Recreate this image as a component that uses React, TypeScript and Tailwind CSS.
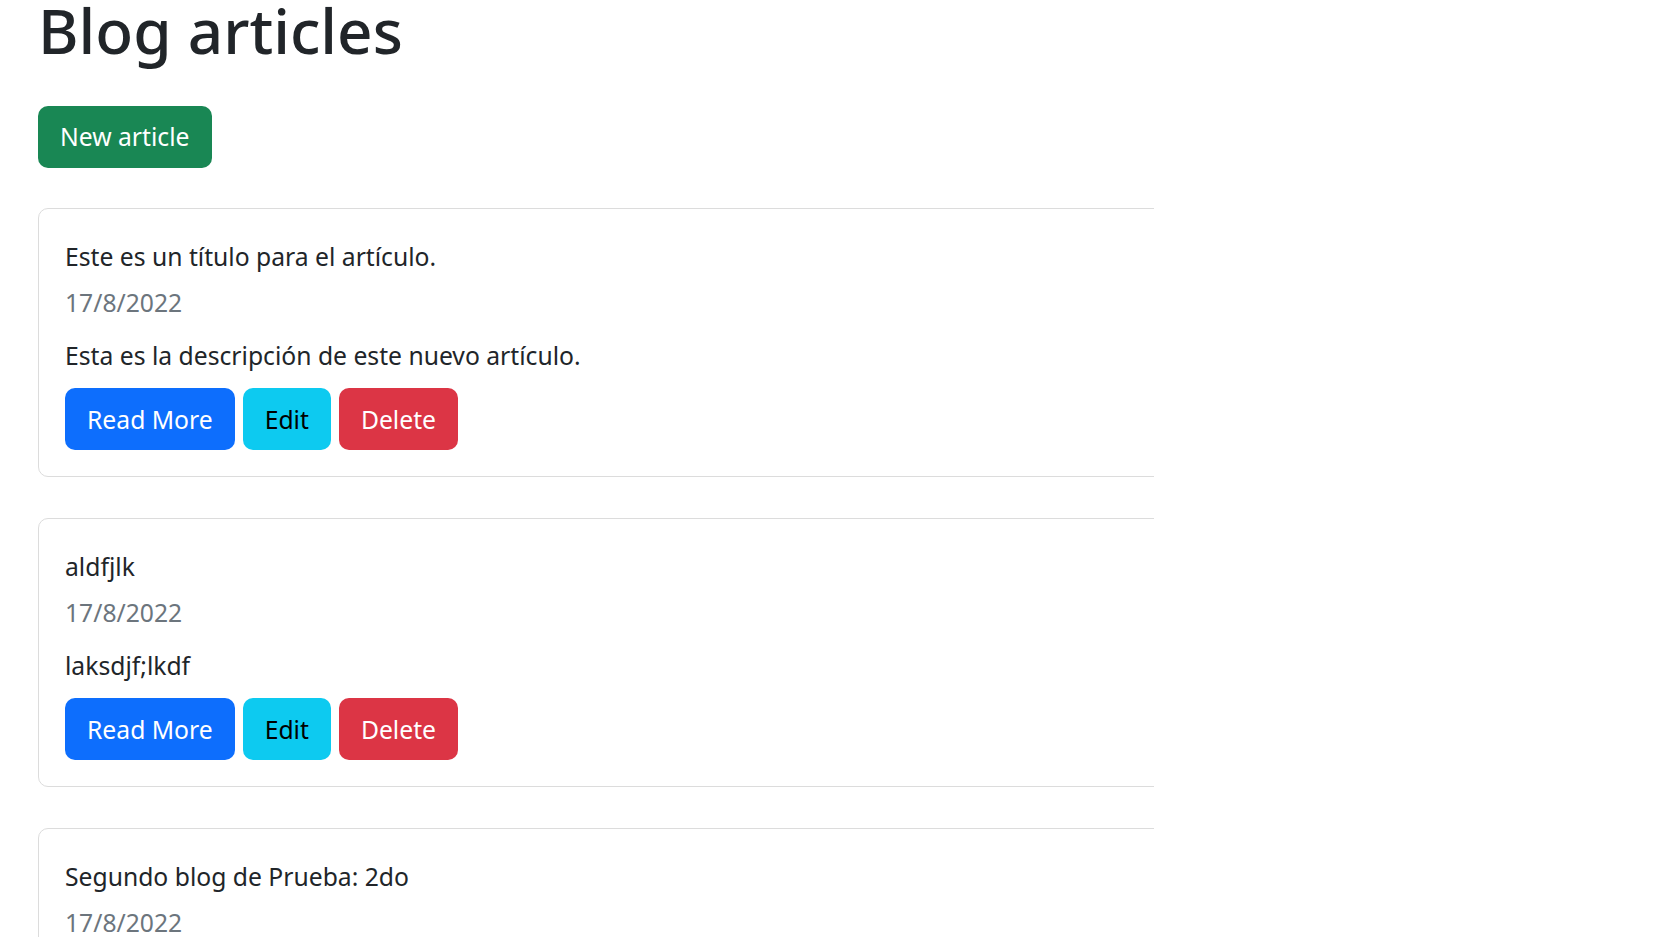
const articles = [
  {
    title: "Este es un título para el artículo.",
    date: "17/8/2022",
    description: "Esta es la descripción de este nuevo artículo.",
  },
  {
    title: "aldfjlk",
    date: "17/8/2022",
    description: "laksdjf;lkdf",
  },
  {
    title: "Segundo blog de Prueba: 2do",
    date: "17/8/2022",
    description: "Esta es la descripción del segundo blog de prueba.",
  },
]

export default function App() {
  return (
    <div className="min-h-screen bg-white overflow-hidden text-[#212529] font-['Noto_Sans',sans-serif]">
      <div className="pl-[38px]">
        <h1 className="mt-[-8px] mb-[38px] text-[62px] leading-[76px] font-medium">Blog articles</h1>

        <button className="h-[62px] px-[22px] rounded-[10px] bg-[#198754] text-white text-[24.7px]">
          New article
        </button>

        {/* article list, clipped on the right */}
        <div className="mt-10 w-[1116px] overflow-hidden">
          {articles.map((article, index) => (
            <div key={index} className="w-[1200px] mb-[41px] p-[26px] border border-[#dcdcdc] rounded-[10px] text-[24.7px] leading-[39px]">
              <p className="mt-[2px] mb-[7px]">{article.title}</p>
              <p className="text-[#6c757d] mb-[14px]">{article.date}</p>
              <p className="mb-[13px]">{article.description}</p>
              <div className="flex gap-2">
                <button className="h-[62px] px-[22px] rounded-[10px] bg-[#0d6efd] text-white">Read More</button>
                <button className="h-[62px] px-[22px] rounded-[10px] bg-[#0dcaf0] text-black">Edit</button>
                <button className="h-[62px] px-[22px] rounded-[10px] bg-[#dc3545] text-white">Delete</button>
              </div>
            </div>
          ))}
        </div>
      </div>
    </div>
  )
}
